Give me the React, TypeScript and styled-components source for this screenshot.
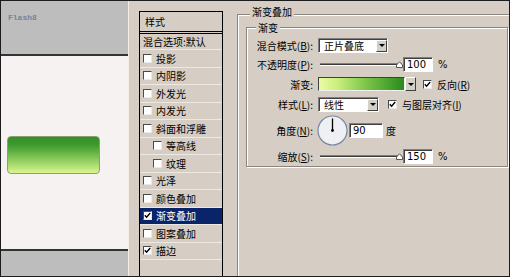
import React from 'react';
import styled, { createGlobalStyle } from 'styled-components';

const BEIGE = '#d6cec5';

const GlobalStyle = createGlobalStyle`
  html, body { margin: 0; padding: 0; background: #fff; }
  body { font-family: "Noto Sans CJK SC", "Liberation Sans", sans-serif; }
`;

const Frame = styled.div`
  width: 510px;
  height: 277px;
  box-sizing: border-box;
  border: 1px solid #1c1c1c;
  display: flex;
  overflow: hidden;
  background: ${BEIGE};
  font-family: "Noto Sans CJK SC", "Liberation Sans", sans-serif;
  font-size: 10px;
  color: #000;
`;

// left: the preview of the layer
const Preview = styled.div`
  width: 127px;
  flex: none;
  display: flex;
  flex-direction: column;
`;

const PreviewTop = styled.div`
  height: 46px;
  background: #bdbdbd;
  border-bottom: 2px solid #333;
  padding: 7px 0 0 7px;
`;

const FlashTag = styled.span`
  font-family: "Liberation Mono", monospace;
  font-size: 8px;
  font-weight: bold;
  color: #76829c;
`;

const PreviewCanvas = styled.div`
  flex: 1;
  background: #f6f2f1;
  padding: 80px 0 0 6px;
`;

const PreviewBottom = styled.div`
  height: 25px;
  background: #bdbdbd;
  border-top: 2px solid #333;
`;

const GreenButton = styled.div`
  width: 93px;
  height: 38px;
  box-sizing: border-box;
  border: 1px solid #88a078;
  border-radius: 4px;
  background: linear-gradient(to bottom, #338e24 0%, #3f9a2e 22%, #7cc253 55%, #d9f58f 100%);
`;

// right: the dialog
const Dialog = styled.div`
  flex: 1;
  display: flex;
  align-items: stretch;
  padding-top: 10px;
  border-left: 1px solid #f1ede8;
  overflow: hidden;
`;

const StyleList = styled.div`
  width: 84px;
  flex: none;
  box-sizing: border-box;
  margin-left: 10px;
  border: 1px solid #000;
  border-bottom: none;
  display: flex;
  flex-direction: column;
`;

const ListHeader = styled.div`
  height: 19px;
  line-height: 19px;
  padding-left: 5px;
  border-bottom: 3px double #000;
`;

const ListRow = styled.div<{ $indent?: boolean; $selected?: boolean; $first?: boolean }>`
  height: ${p => (p.$first ? 16 : 17.5)}px;
  box-sizing: border-box;
  flex: none;
  display: flex;
  align-items: center;
  gap: 4px;
  padding-left: ${p => (p.$indent ? 13 : 3)}px;
  border-bottom: 1px solid #ece8e2;
  white-space: nowrap;
  background: ${p => (p.$selected ? '#0a246a' : 'transparent')};
  color: ${p => (p.$selected ? '#fff' : '#000')};
`;

const Box = styled.span`
  width: 9px;
  height: 9px;
  flex: none;
  box-sizing: border-box;
  background: #fff;
  border: 1px solid;
  border-color: #4a4a4a #e8e8e8 #e8e8e8 #4a4a4a;
  display: inline-flex;
  align-items: center;
  justify-content: center;
`;

function Check({ on }: { on?: boolean }) {
  return (
    <Box>
      {on && (
        <svg width="7" height="7" viewBox="0 0 7 7">
          <path d="M0.8 3.2 L2.6 5.2 L6.2 1" fill="none" stroke="#000" strokeWidth="1.4" />
        </svg>
      )}
    </Box>
  );
}

const Options = styled.div`
  position: relative;
  flex: 1;
  margin: 3px -20px -20px 14px;
  border: 1px solid #8c857d;
  box-shadow: inset 1px 1px 0 #fff, 1px 1px 0 #fff;
`;

const GroupTitle = styled.span<{ $left: number; $top: number }>`
  position: absolute;
  top: ${p => p.$top}px;
  left: ${p => p.$left}px;
  padding: 0 2px;
  line-height: 12px;
  background: ${BEIGE};
`;

const InnerGroup = styled.div`
  position: relative;
  width: 262px;
  height: 140px;
  box-sizing: border-box;
  margin: 12px 0 0 8px;
  padding-top: 8px;
  border: 1px solid #8c857d;
  box-shadow: inset 1px 1px 0 #fff, 1px 1px 0 #fff;
`;

const Field = styled.div<{ $h: number }>`
  height: ${p => p.$h}px;
  display: flex;
  align-items: center;
  white-space: nowrap;
`;

const Label = styled.span`
  width: 66px;
  flex: none;
  text-align: right;
  margin-right: 5px;
`;

const Select = styled.div<{ $w: number }>`
  width: ${p => p.$w}px;
  height: 15px;
  box-sizing: border-box;
  background: #fff;
  border: 1px solid;
  border-color: #7f7f7f #fff #fff #7f7f7f;
  box-shadow: inset 1px 1px 0 #404040;
  display: flex;
  align-items: center;
  justify-content: space-between;
  padding: 1px 0 0 5px;
`;

const DropButton = styled.span`
  width: 11px;
  height: 12px;
  box-sizing: border-box;
  flex: none;
  background: #d4d0c8;
  border: 1px solid;
  border-color: #fff #404040 #404040 #fff;
  display: flex;
  align-items: center;
  justify-content: center;
  &::after {
    content: '';
    border-left: 3px solid transparent;
    border-right: 3px solid transparent;
    border-top: 3px solid #000;
  }
`;

const Slider = styled.div`
  position: relative;
  width: 85px;
  height: 12px;
  flex: none;
  display: flex;
  align-items: center;
`;

const Track = styled.div`
  width: 82px;
  height: 3px;
  box-sizing: border-box;
  margin-left: 2px;
  background: #3a3a3a;
  border-top: 1px solid #808080;
  border-bottom: 1px solid #fff;
`;

const Thumb = styled.svg`
  position: absolute;
  right: 0;
  top: 3px;
`;

const NumberBox = styled.div<{ $w: number; $gap?: number }>`
  width: ${p => p.$w}px;
  height: 15px;
  box-sizing: border-box;
  flex: none;
  margin-left: ${p => p.$gap ?? 0}px;
  background: #fff;
  border: 1px solid;
  border-color: #7f7f7f #fff #fff #7f7f7f;
  box-shadow: inset 1px 1px 0 #404040;
  padding: 0 0 0 3px;
  font-family: "DejaVu Sans", sans-serif;
  font-size: 10px;
  line-height: 13px;
`;

const Unit = styled.span<{ $gap: number }>`
  margin-left: ${p => p.$gap}px;
  font-family: "DejaVu Sans", "Noto Sans CJK SC", sans-serif;
`;

const GradientBar = styled.div`
  width: 87px;
  height: 14px;
  box-sizing: border-box;
  border: 1px solid;
  border-color: #404040 #f0f0f0 #f0f0f0 #404040;
  background: linear-gradient(to right, #eafca6 0%, #c9ef7c 22%, #7cc64a 55%, #2a8a1c 100%);
`;

const BarButton = styled(DropButton)`
  height: 14px;
`;

const CheckLabel = styled.span<{ $gap: number }>`
  display: inline-flex;
  align-items: center;
  gap: 5px;
  margin-left: ${p => p.$gap}px;
`;

const Dial = styled.svg`
  flex: none;
  margin-left: -1px;
`;

const styleItems: { name: string; on?: boolean; indent?: boolean; selected?: boolean }[] = [
  { name: '投影' },
  { name: '内阴影' },
  { name: '外发光' },
  { name: '内发光' },
  { name: '斜面和浮雕' },
  { name: '等高线', indent: true },
  { name: '纹理', indent: true },
  { name: '光泽' },
  { name: '颜色叠加' },
  { name: '渐变叠加', on: true, selected: true },
  { name: '图案叠加' },
  { name: '描边', on: true },
];

function SliderWithValue({ value }: { value: number }) {
  return (
    <>
      <Slider>
        <Track />
        <Thumb width="7" height="7" viewBox="0 0 7 7">
          <path d="M0.5 6.5 L0.5 4 L3.5 0.8 L6.5 4 L6.5 6.5 Z" fill="#fff" stroke="#555" strokeWidth="1" />
        </Thumb>
      </Slider>
      <NumberBox $w={30}>{value}</NumberBox>
      <Unit $gap={5}>%</Unit>
    </>
  );
}

export default function App() {
  return (
    <>
      <GlobalStyle />
      <Frame>
        <Preview>
          <PreviewTop>
            <FlashTag>Flash8</FlashTag>
          </PreviewTop>
          <PreviewCanvas>
            <GreenButton />
          </PreviewCanvas>
          <PreviewBottom />
        </Preview>

        <Dialog>
          <StyleList>
            <ListHeader>样式</ListHeader>
            <ListRow $first>混合选项:默认</ListRow>
            {styleItems.map(item => (
              <ListRow key={item.name} $indent={item.indent} $selected={item.selected}>
                <Check on={item.on} />
                {item.name}
              </ListRow>
            ))}
          </StyleList>

          <Options>
            <GroupTitle $left={12} $top={-9}>渐变叠加</GroupTitle>
            <InnerGroup>
              <GroupTitle $left={9} $top={-6}>渐变</GroupTitle>

              <Field $h={18}>
                <Label>混合模式(<u>B</u>):</Label>
                <Select $w={70}>
                  正片叠底
                  <DropButton />
                </Select>
              </Field>

              <Field $h={20}>
                <Label>不透明度(<u>P</u>):</Label>
                <SliderWithValue value={100} />
              </Field>

              <Field $h={20}>
                <Label>渐变:</Label>
                <GradientBar />
                <BarButton />
                <CheckLabel $gap={7}>
                  <Check on />
                  <span>反向(<u>R</u>)</span>
                </CheckLabel>
              </Field>

              <Field $h={20}>
                <Label>样式(<u>L</u>):</Label>
                <Select $w={61}>
                  线性
                  <DropButton />
                </Select>
                <CheckLabel $gap={9}>
                  <Check on />
                  <span>与图层对齐(<u>I</u>)</span>
                </CheckLabel>
              </Field>

              <Field $h={32}>
                <Label>角度(<u>N</u>):</Label>
                <Dial width="31" height="31" viewBox="0 0 31 31">
                  <circle cx="15.5" cy="15.5" r="14.5" fill="#eef0f4" stroke="#7886a4" strokeWidth="1.2" />
                  <line x1="15.5" y1="15.5" x2="15.5" y2="3.5" stroke="#000" strokeWidth="1.3" />
                  <circle cx="15.5" cy="15.5" r="1.4" fill="#000" />
                </Dial>
                <NumberBox $w={34} $gap={1}>90</NumberBox>
                <Unit $gap={3}>度</Unit>
              </Field>

              <Field $h={20}>
                <Label>缩放(<u>S</u>):</Label>
                <SliderWithValue value={150} />
              </Field>
            </InnerGroup>
          </Options>
        </Dialog>
      </Frame>
    </>
  );
}
